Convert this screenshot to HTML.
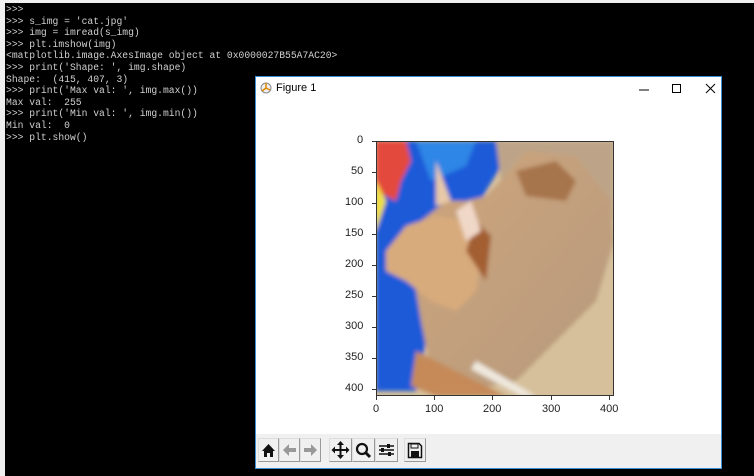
<!DOCTYPE html>
<html><head><meta charset="utf-8"><style>
html,body{margin:0;padding:0;width:754px;height:476px;overflow:hidden;background:#f0f0f0;}
#con{position:absolute;left:5px;top:3px;width:749px;height:473px;background:#000;}
#txt{position:absolute;left:1px;top:1px;margin:0;font:9.7px/11.6px "Liberation Mono",monospace;color:#d0d0d0;white-space:pre;}
#win{position:absolute;left:255px;top:76px;width:465px;height:391px;background:#fff;border:1px solid #3b8fd8;}
#title{position:absolute;left:0;top:0;width:100%;height:24px;font:11px "Liberation Sans",sans-serif;color:#000;}
#tb{position:absolute;left:0;top:357px;width:100%;height:34px;background:#f0f0f0;}
.btn{position:absolute;top:4px;width:21px;height:24px;border:1px solid #ddd;border-right-color:#999;border-bottom-color:#999;box-sizing:border-box;}
.lbl{position:absolute;font:11px "Liberation Sans",sans-serif;color:#222;}
</style></head><body>
<div id="con"><pre id="txt">&gt;&gt;&gt;
&gt;&gt;&gt; s_img = 'cat.jpg'
&gt;&gt;&gt; img = imread(s_img)
&gt;&gt;&gt; plt.imshow(img)
&lt;matplotlib.image.AxesImage object at 0x0000027B55A7AC20&gt;
&gt;&gt;&gt; print('Shape: ', img.shape)
Shape:  (415, 407, 3)
&gt;&gt;&gt; print('Max val: ', img.max())
Max val:  255
&gt;&gt;&gt; print('Min val: ', img.min())
Min val:  0
&gt;&gt;&gt; plt.show()</pre></div>
<div id="win">
 <div id="title">
  <svg style="position:absolute;left:4px;top:5px" width="12" height="12"><circle cx="6" cy="6" r="5" fill="#eee" stroke="#888"/><path d="M6 6L6 1M6 6L10 8M6 6L2 9" stroke="#d80" stroke-width="1.5"/></svg>
  <span style="position:absolute;left:20px;top:5px">Figure 1</span>
  <svg style="position:absolute;left:376px;top:4px" width="86" height="16"><path d="M7 9H17" stroke="#000"/><rect x="40.5" y="3.5" width="8" height="8" fill="none" stroke="#000"/><path d="M74 3L83 12M83 3L74 12" stroke="#000"/></svg>
 </div>
 <svg style="position:absolute;left:0;top:0" width="465" height="357">
  <defs>
   <linearGradient id="cg" x1="0" y1="0" x2="1" y2="1"><stop offset="0" stop-color="#cfa57c"/><stop offset="1" stop-color="#b59a7e"/></linearGradient>
   <filter id="bl"><feGaussianBlur stdDeviation="2"/></filter>
   <clipPath id="cp"><rect width="238" height="255"/></clipPath>
  </defs>
  <g transform="translate(120,64)">
   <rect width="238" height="255" fill="#d6c09c"/>
   <g filter="url(#bl)" clip-path="url(#cp)">
   <path d="M0 0H140L110 50L70 120L50 200L40 250H0Z" fill="#1d5ad8"/>
   <path d="M0 0H30L35 20L25 40L20 60L0 50Z" fill="#e4483c"/>
   <path d="M0 40L10 60L0 90Z" fill="#f0e040"/>
   <path d="M40 0H100L90 25L55 40Z" fill="#2e86e6"/>
   <path d="M120 0H238V80L220 60L190 20L150 10L125 40Z" fill="#bda488"/>
   <path d="M125 40L150 10L200 15L235 60L238 100L220 160L180 200L140 240L90 250L55 230L45 180L35 120L45 80L70 60L90 60L110 55Z" fill="url(#cg)"/>
   <path d="M140 30L180 20L200 40L190 60L150 55Z" fill="#a7754c"/>
   <path d="M10 110L30 85L60 75L90 80L105 110L100 150L80 170L55 160L30 140L10 130Z" fill="#d8ab7b"/>
   <path d="M90 110L100 80L115 95L110 140Z" fill="#a35f33"/>
   <path d="M60 20L75 60L60 65Z" fill="#e8c9a8"/>
   <path d="M80 70L95 60L105 90L90 100Z" fill="#f0d8c8"/>
   <path d="M40 210L100 240L130 255H60L35 245Z" fill="#c58a58"/>
   <path d="M100 220L160 255H145L95 228Z" fill="#eee8dd"/>
   </g>
   <rect x="0.5" y="0.5" width="237" height="254" fill="none" stroke="#333"/>
  </g>
  <g stroke="#333">
   <path d="M116 64.5h4M116 95.5h4M116 126.5h4M116 157.5h4M116 188.5h4M116 219.5h4M116 250.5h4M116 281.5h4M116 312.5h4"/>
   <path d="M120.5 319v4M178.5 319v4M236.5 319v4M295.5 319v4M353.5 319v4"/>
  </g>
 </svg>
 <span class="lbl" style="left:101px;top:57px">0</span>
 <span class="lbl" style="left:95px;top:88px">50</span>
 <span class="lbl" style="left:89px;top:119px">100</span>
 <span class="lbl" style="left:89px;top:150px">150</span>
 <span class="lbl" style="left:89px;top:181px">200</span>
 <span class="lbl" style="left:89px;top:212px">250</span>
 <span class="lbl" style="left:89px;top:243px">300</span>
 <span class="lbl" style="left:89px;top:274px">350</span>
 <span class="lbl" style="left:89px;top:305px">400</span>
 <span class="lbl" style="left:117px;top:326px">0</span>
 <span class="lbl" style="left:169px;top:326px">100</span>
 <span class="lbl" style="left:227px;top:326px">200</span>
 <span class="lbl" style="left:286px;top:326px">300</span>
 <span class="lbl" style="left:344px;top:326px">400</span>
 <div id="tb">
  <div class="btn" style="left:2px"><svg width="19" height="22"><path d="M3 12L9.5 5L16 12H14V18H11V14H8V18H5V12Z" fill="#111"/></svg></div>
  <div class="btn" style="left:23px"><svg width="19" height="22"><path d="M3 11L9 5V9H16V13H9V17Z" fill="#999"/></svg></div>
  <div class="btn" style="left:44px"><svg width="19" height="22"><path d="M16 11L10 5V9H3V13H10V17Z" fill="#999"/></svg></div>
  <div class="btn" style="left:73px;width:23px"><svg width="21" height="22"><path d="M10.5 3V19M2.5 11H18.5" stroke="#111" stroke-width="2"/><path d="M10.5 2L7 6H14ZM10.5 20L7 16H14ZM1.5 11L5 7.5V14.5ZM19.5 11L16 7.5V14.5Z" fill="#111"/></svg></div>
  <div class="btn" style="left:96px;width:23px"><svg width="21" height="22"><circle cx="9" cy="10" r="5" fill="none" stroke="#111" stroke-width="2.2"/><path d="M12.5 13.5L17 18" stroke="#111" stroke-width="3"/></svg></div>
  <div class="btn" style="left:119px;width:23px"><svg width="21" height="22"><path d="M3 7H18M3 11H18M3 15H18" stroke="#111" stroke-width="1.5"/><rect x="11" y="5" width="3" height="4" fill="#111"/><rect x="5" y="9" width="3" height="4" fill="#111"/><rect x="12" y="13" width="3" height="4" fill="#111"/></svg></div>
  <div class="btn" style="left:148px;width:22px"><svg width="20" height="22"><path d="M3.5 4.5H14L16.5 7V18.5H3.5Z" fill="none" stroke="#111" stroke-width="1.5"/><rect x="6" y="5" width="7" height="4" fill="none" stroke="#111"/><rect x="6" y="12" width="8" height="6" fill="#111"/></svg></div>
 </div>
</div>
</body></html>
